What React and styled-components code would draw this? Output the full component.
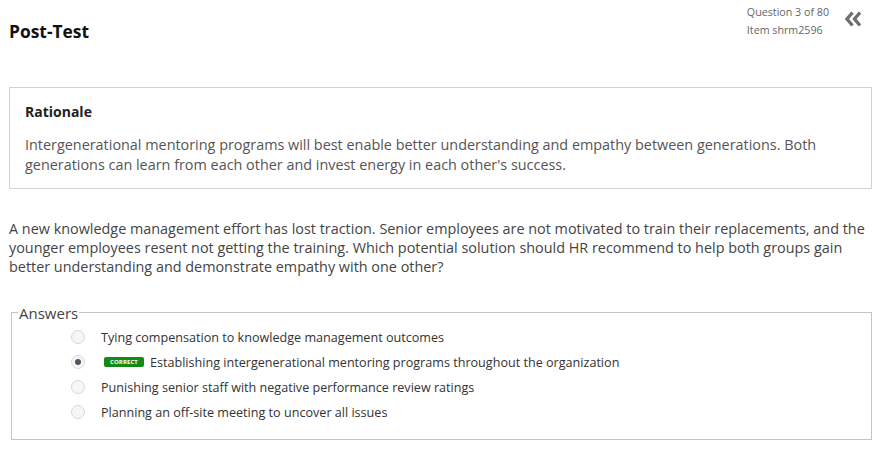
import styled, { createGlobalStyle } from 'styled-components'

const GlobalStyle = createGlobalStyle`
  html, body {
    margin: 0;
    padding: 0;
    background: #fff;
  }
  body {
    font-family: 'Open Sans', 'DejaVu Sans', sans-serif;
    color: #444;
  }
`

const Page = styled.div`
  width: 896px;
  padding: 0 24px 0 9px;
  box-sizing: border-box;
`

const Header = styled.header`
  display: flex;
  justify-content: space-between;
  align-items: flex-start;
  height: 87px;
`

const Title = styled.h1`
  margin: 19px 0 0;
  font-size: 17.4px;
  font-weight: 700;
  color: #111;
  line-height: 24px;
`

const Meta = styled.div`
  display: flex;
  align-items: flex-start;
  gap: 15px;
  margin-top: 3px;
  margin-right: 9px;
`

const MetaText = styled.div`
  font-size: 10.7px;
  line-height: 18px;
  color: #666;
`

const Collapse = styled.button`
  border: 0;
  background: none;
  padding: 0;
  margin-top: 8px;
  cursor: pointer;
  display: flex;
`

const Rationale = styled.section`
  border: 1px solid #d3d3d3;
  padding: 14px 15px 14px 15px;
`

const RationaleTitle = styled.h2`
  margin: 0 0 13px;
  font-size: 14px;
  font-weight: 700;
  color: #222;
  line-height: 20px;
`

const RationaleText = styled.p`
  margin: 0;
  font-size: 14.4px;
  line-height: 19.5px;
  color: #555;
`

const Question = styled.p`
  margin: 30px 0 0;
  font-size: 14.4px;
  line-height: 19.2px;
  color: #444;
`

const Answers = styled.fieldset`
  margin: 28px 0 0 2px;
  border: 1px solid #c4c4c4;
  padding: 4px 0 14px;
  box-sizing: border-box;
`

const Legend = styled.legend`
  font-size: 15px;
  color: #444;
  padding: 0 1px;
  margin-left: 6px;
  line-height: 16px;
`

const OptionList = styled.div`
  display: flex;
  flex-direction: column;
  padding-left: 59px;
`

const Option = styled.label`
  display: flex;
  align-items: center;
  height: 25px;
  font-size: 12.6px;
  color: #333;
`

const Radio = styled.span`
  width: 14px;
  height: 14px;
  border-radius: 50%;
  border: 1px solid #d8d8d8;
  background: #f6f6f6;
  box-sizing: border-box;
  display: flex;
  align-items: center;
  justify-content: center;
  margin-right: 16px;
  flex-shrink: 0;

  &::after {
    content: '';
    width: 6px;
    height: 6px;
    border-radius: 50%;
    background: ${(p) => (p.checked ? '#4e5563' : 'transparent')};
  }
`

const Badge = styled.span`
  display: inline-flex;
  align-items: center;
  justify-content: center;
  width: 40px;
  height: 10px;
  margin: 0 6px 0 3px;
  background: #148a14;
  border-radius: 2px;
  color: #fff;
  font-size: 6px;
  font-weight: 700;
  letter-spacing: 0.1px;
  line-height: 1;
`

const answers = [
  { text: 'Tying compensation to knowledge management outcomes' },
  { text: 'Establishing intergenerational mentoring programs throughout the organization', correct: true },
  { text: 'Punishing senior staff with negative performance review ratings' },
  { text: 'Planning an off-site meeting to uncover all issues' }
]

const DoubleChevron = () => (
  <svg width='19' height='16' viewBox='0 0 19 16'>
    <path d='M8.5 1.5 L3 8 L8.5 14.5' fill='none' stroke='#6f6f6f' strokeWidth='3.4' />
    <path d='M16 1.5 L10.5 8 L16 14.5' fill='none' stroke='#6f6f6f' strokeWidth='3.4' />
  </svg>
)

export default function App () {
  return (
    <>
      <GlobalStyle />
      <Page>
        <Header>
          <Title>Post-Test</Title>
          <Meta>
            <MetaText>
              <div>Question 3 of 80</div>
              <div>Item shrm2596</div>
            </MetaText>
            <Collapse aria-label='Collapse'>
              <DoubleChevron />
            </Collapse>
          </Meta>
        </Header>
        <Rationale>
          <RationaleTitle>Rationale</RationaleTitle>
          <RationaleText>
            Intergenerational mentoring programs will best enable better understanding and empathy between generations. Both
            generations can learn from each other and invest energy in each other's success.
          </RationaleText>
        </Rationale>
        <Question>
          A new knowledge management effort has lost traction. Senior employees are not motivated to train their replacements, and the
          younger employees resent not getting the training. Which potential solution should HR recommend to help both groups gain
          better understanding and demonstrate empathy with one other?
        </Question>
        <Answers>
          <Legend>Answers</Legend>
          <OptionList>
            {answers.map((a) => (
              <Option key={a.text}>
                <Radio checked={a.correct} />
                {a.correct && <Badge>CORRECT</Badge>}
                {a.text}
              </Option>
            ))}
          </OptionList>
        </Answers>
      </Page>
    </>
  )
}
